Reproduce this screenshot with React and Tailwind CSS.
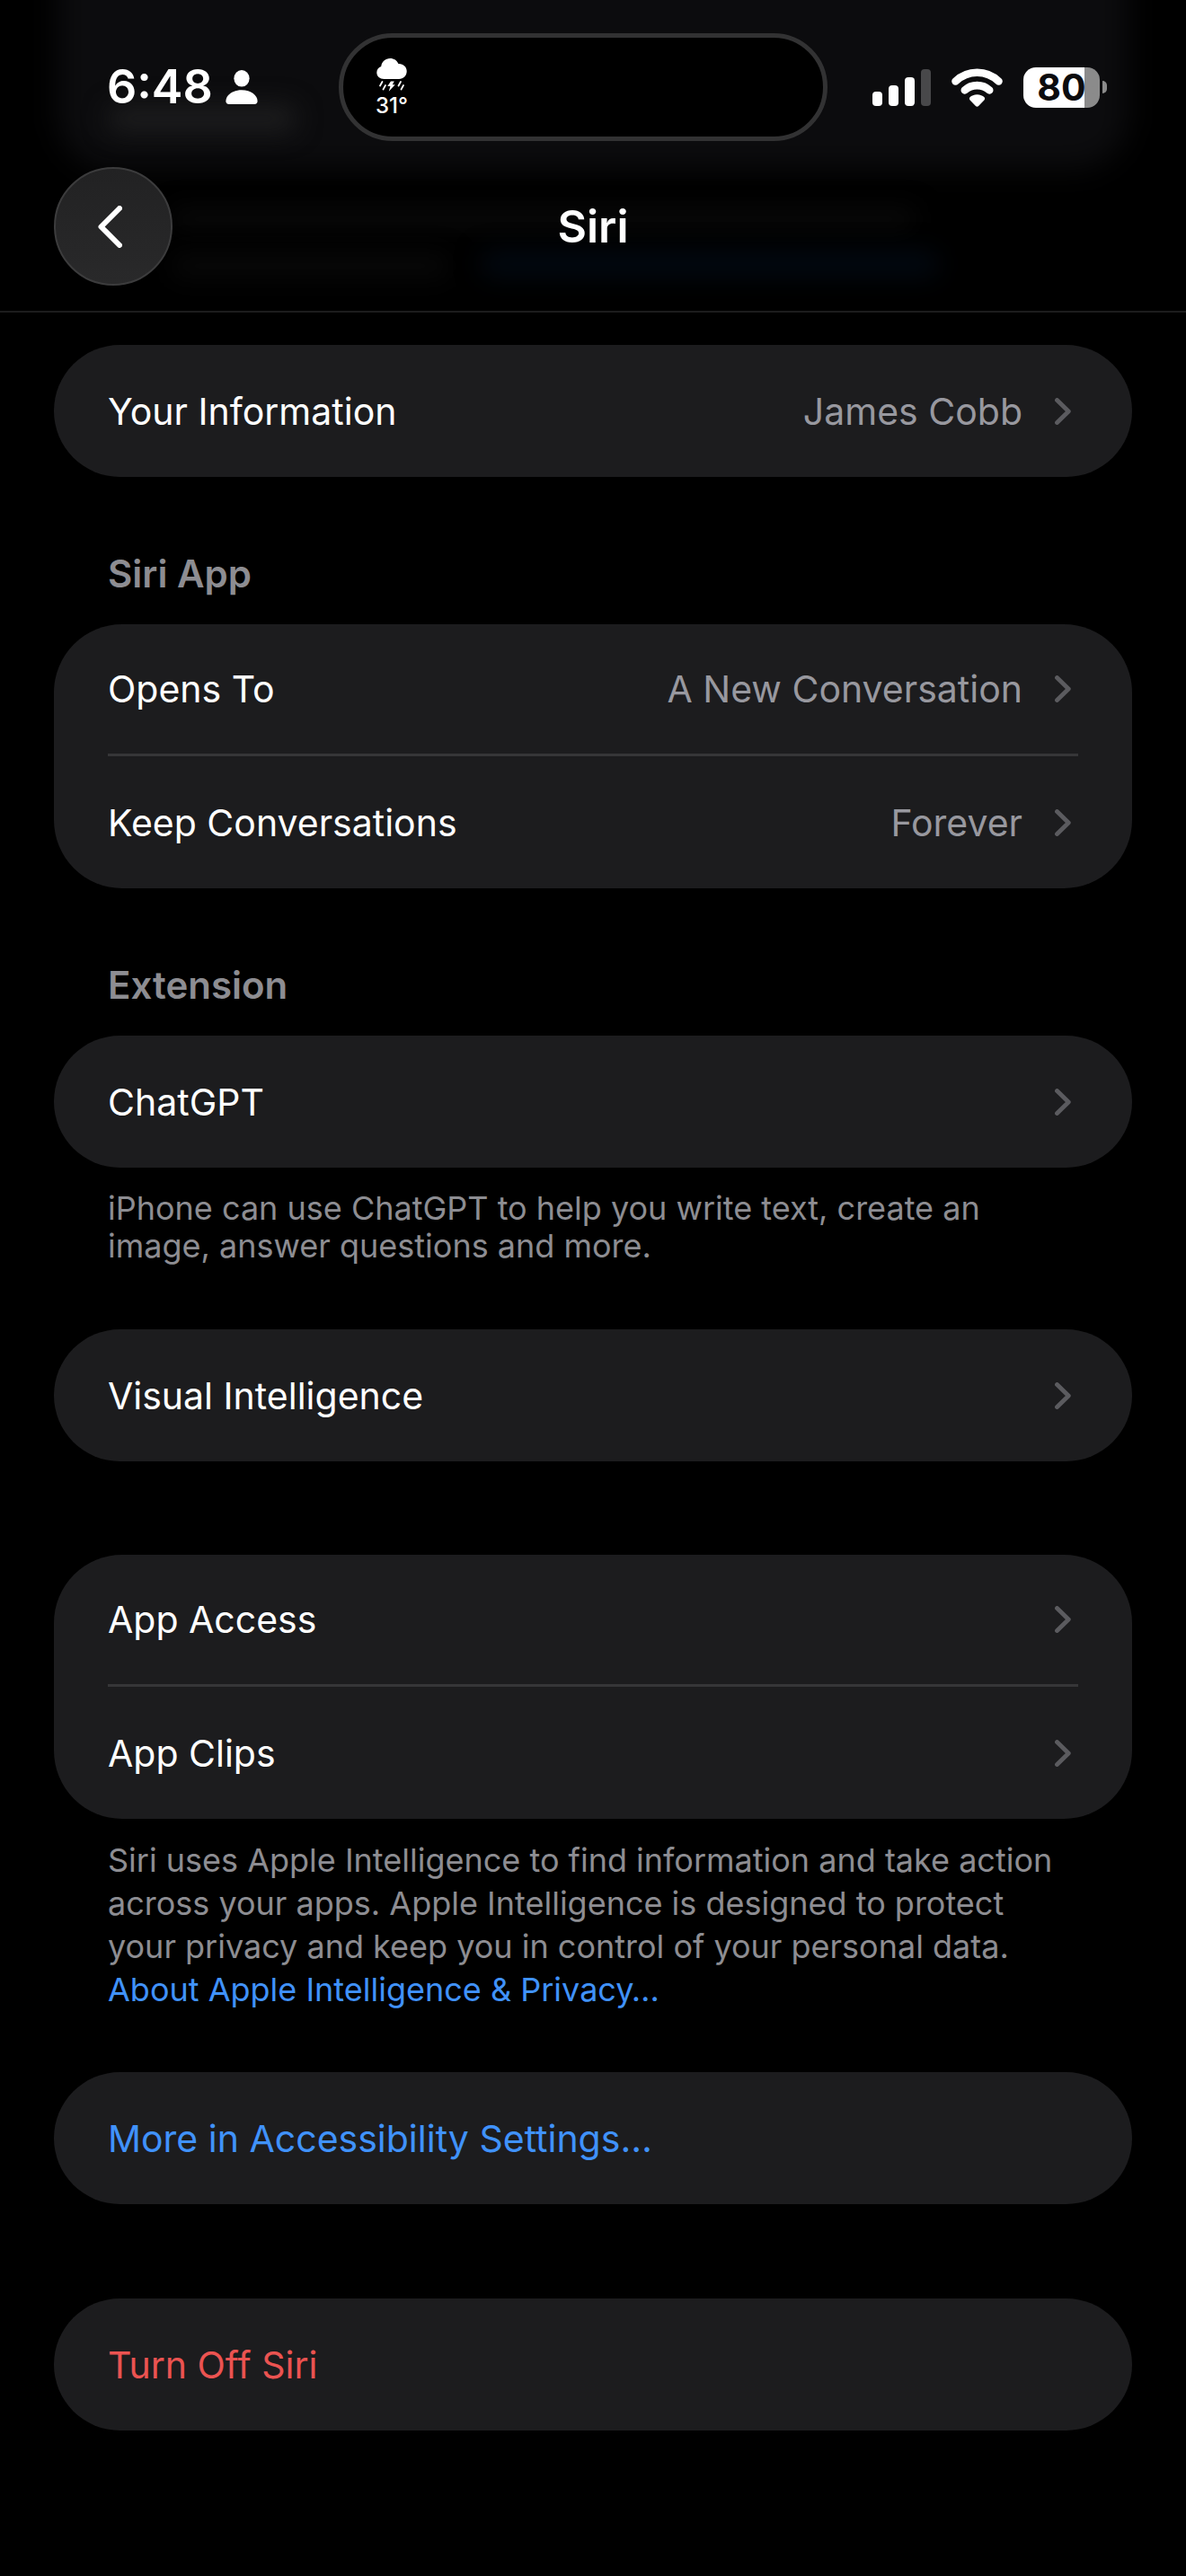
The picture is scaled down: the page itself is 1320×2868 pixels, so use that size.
/* ======================
   Data
====================== */
const sections = [
  {
    id: "info",
    spacing: "mt-9",
    rows: [{ label: "Your Information", value: "James Cobb" }],
  },
  {
    id: "siri-app",
    title: "Siri App",
    spacing: "mt-[84px]",
    rows: [
      { label: "Opens To", value: "A New Conversation" },
      { label: "Keep Conversations", value: "Forever" },
    ],
  },
  {
    id: "extension",
    title: "Extension",
    spacing: "mt-[84px]",
    rows: [{ label: "ChatGPT" }],
    footer: (
      <p className="px-[60px] pt-6 text-4xl leading-[42px] text-[#8d8d92]">
        iPhone can use ChatGPT to help you write text, create an image, answer
        questions and more.
      </p>
    ),
  },
  {
    id: "visual",
    spacing: "mt-[72px]",
    rows: [{ label: "Visual Intelligence" }],
  },
  {
    id: "apps",
    spacing: "mt-[104px]",
    rows: [{ label: "App Access" }, { label: "App Clips" }],
    footer: (
      <p className="px-[60px] pt-[22px] text-4xl leading-[48px] text-[#8d8d92]">
        Siri uses Apple Intelligence to find information and take action across
        your apps. Apple Intelligence is designed to protect your privacy and
        keep you in control of your personal data.{" "}
        <a href="#privacy" className="block text-[#4092fb]">
          About Apple Intelligence & Privacy…
        </a>
      </p>
    ),
  },
  {
    id: "accessibility",
    spacing: "mt-[68px]",
    rows: [
      { label: "More in Accessibility Settings…", color: "text-[#4092fb]", plain: true },
    ],
  },
  {
    id: "turn-off",
    spacing: "mt-[105px]",
    rows: [{ label: "Turn Off Siri", color: "text-[#eb5351]", plain: true }],
  },
];

/* ======================
   Icons
====================== */
const Chevron = () => (
  <svg width="18" height="30" viewBox="0 0 18 30" fill="none" className="mr-2 shrink-0" aria-hidden="true">
    <path
      d="M2.5 2.5 15.3 15 2.5 27.5"
      stroke="#5b5b5f"
      strokeWidth="4.8"
      strokeLinecap="round"
      strokeLinejoin="round"
    />
  </svg>
);

const PersonIcon = () => (
  <svg width="36" height="38" viewBox="0 0 36 38" fill="white" aria-hidden="true">
    <ellipse cx="18" cy="9.3" rx="8.6" ry="9.3" />
    <path d="M4 38C1.500 38 .4 36.600 .4 34.500 .4 28.500 7.500 22.300 18 22.300S35.600 28.500 35.600 34.500C35.600 36.600 34.500 38 32 38Z" />
  </svg>
);

const StormIcon = () => (
  <svg width="34" height="37" viewBox="0 0 34 37" aria-hidden="true">
    <path
      d="M8.500 23C3.800 23 .3 20 .3 15.800c0-3.300 2-6 4.900-6.900C5.900 3.600 10 0 15.200 0c4.200 0 7.700 2.200 9.200 6C29.700 5.700 33.700 9.400 33.700 14.300 33.700 19.300 30 23 25 23Z"
      fill="white"
    />
    <path
      d="M6.500 26 4 30.500M10 30 7.500 34.500M27 26l-2.500 4.500M30 30l-2.500 4.500"
      stroke="white"
      strokeWidth="1.800"
      strokeLinecap="round"
    />
    <path d="M16 25.500h3.800L17.800 29.200h2.900L13.800 36.700 15.400 31h-3.200Z" fill="white" />
  </svg>
);

const SignalIcon = () => (
  <svg width="65" height="41" viewBox="0 0 65 41" fill="white" aria-hidden="true">
    <rect x="0" y="25" width="11" height="16" rx="4" />
    <rect x="18" y="18" width="11" height="23" rx="4" />
    <rect x="36" y="9" width="11" height="32" rx="4" />
    <rect x="54" y="0" width="11" height="41" rx="4" fill="#48484a" />
  </svg>
);

const WifiIcon = () => (
  <svg width="57" height="43" viewBox="0 0 57 43" aria-hidden="true">
    <path d="M4.500 14.500C18 1.500 39 1.500 52.500 14.500" fill="none" stroke="white" strokeWidth="8.600" strokeLinecap="round" />
    <path d="M14.800 24.400C22.500 17.300 34.500 17.300 42.200 24.400" fill="none" stroke="white" strokeWidth="8.600" strokeLinecap="round" />
    <path
      d="M28.500 29.200c3.400 0 6.300 1.300 8 3.100.9 1 .8 2.200-.1 3.100l-6.300 6.700c-1 1-2.200 1-3.200 0l-6.300-6.700c-.9-.9-1-2.100-.1-3.100 1.700-1.800 4.600-3.100 8-3.100Z"
      fill="white"
    />
  </svg>
);

const Battery = () => (
  <div className="flex items-center gap-[3px]">
    <div className="flex h-[45px] w-[85px] items-center justify-center rounded-[14px] bg-linear-to-r from-white from-80% to-[#8b8b8b] to-80% text-[41px] font-bold leading-[45px] text-[#0c0c0e]">
      80
    </div>
    <div className="h-[14px] w-[5px] rounded-r-full bg-[#8b8b8b]" />
  </div>
);

/* ======================
   Header
====================== */
const StatusBar = () => (
  <div className="relative grid grid-cols-[377px_544px_1fr] items-center pt-[37px]">
    <div className="flex items-center gap-[14px] pl-[119px]">
      <span className="text-[52px] font-semibold leading-[64px]">6:48</span>
      <PersonIcon />
    </div>

    <div className="flex h-[120px] items-center rounded-full border-[5px] border-[#323233] bg-black pl-9">
      <div className="flex flex-col items-center gap-1">
        <StormIcon />
        <span className="text-2xl font-medium leading-6">31°</span>
      </div>
    </div>

    <div className="flex items-center justify-end gap-[23px] pr-[88px]">
      <SignalIcon />
      <WifiIcon />
      <Battery />
    </div>
  </div>
);

// content scrolled under the bar shows through as a dim blur
const ScrolledContent = () => (
  <div className="pointer-events-none absolute inset-0" aria-hidden="true">
    <div className="absolute inset-x-[64px] -top-16 h-[252px] rounded-[60px] bg-[#0c0c0e] blur-[16px]" />
    <div className="absolute left-[120px] top-[118px] h-7 w-[210px] rounded-full bg-[#1e1e1f] blur-[14px]" />
    <div className="absolute left-[190px] top-[232px] h-6 w-[830px] rounded-full bg-[#090909] blur-[14px]" />
    <div className="absolute left-[190px] top-[284px] h-6 w-[310px] rounded-full bg-[#090909] blur-[14px]" />
    <div className="absolute left-[535px] top-[280px] h-7 w-[510px] rounded-full bg-[#020912] blur-[14px]" />
  </div>
);

const Header = () => (
  <header className="relative overflow-hidden border-b-2 border-[#1c1c1d]">
    <ScrolledContent />
    <StatusBar />
    <div className="relative mt-[29px] grid grid-cols-[1fr_auto_1fr] items-center px-[60px] pb-7">
      <button
        type="button"
        aria-label="Back"
        className="flex size-[132px] items-center justify-center rounded-full border-2 border-[#3c3c3d] bg-linear-to-b from-[#222223] to-[#29292a]"
      >
        <svg width="27" height="47" viewBox="0 0 27 47" fill="none" className="mr-2" aria-hidden="true">
          <path d="M24 3 3.500 23.500 24 44" stroke="white" strokeWidth="6" strokeLinecap="round" strokeLinejoin="round" />
        </svg>
      </button>
      <h1 className="text-[50px] font-semibold leading-[60px]">Siri</h1>
    </div>
  </header>
);

/* ======================
   List
====================== */
const Row = ({ label, value, color = "text-white", plain, last }) => (
  <li>
    <button
      type="button"
      className={`flex h-[147px] w-full items-center justify-between text-left ${last ? "" : "border-b-[3px] border-[#363638]"}`}
    >
      <span className={color}>{label}</span>
      {!plain && (
        <span className="flex items-center gap-9 text-[#98989f]">
          {value}
          <Chevron />
        </span>
      )}
    </button>
  </li>
);

const Section = ({ title, rows, footer, spacing }) => (
  <section className={spacing}>
    {title && (
      <h2 className="px-[60px] pb-8 text-[42px] font-semibold leading-[48px] text-[#8d8d92]">
        {title}
      </h2>
    )}
    <ul className="rounded-[76px] bg-[#1c1c1e] px-[60px] text-[41px] leading-[48px]">
      {rows.map((row, i) => (
        <Row key={row.label} {...row} last={i === rows.length - 1} />
      ))}
    </ul>
    {footer}
  </section>
);

export default function App() {
  return (
    <div className="min-h-screen bg-black font-['Inter',sans-serif] text-white">
      <Header />
      <main className="px-[60px] pb-24">
        {sections.map(({ id, ...section }) => (
          <Section key={id} {...section} />
        ))}
      </main>
    </div>
  );
}
